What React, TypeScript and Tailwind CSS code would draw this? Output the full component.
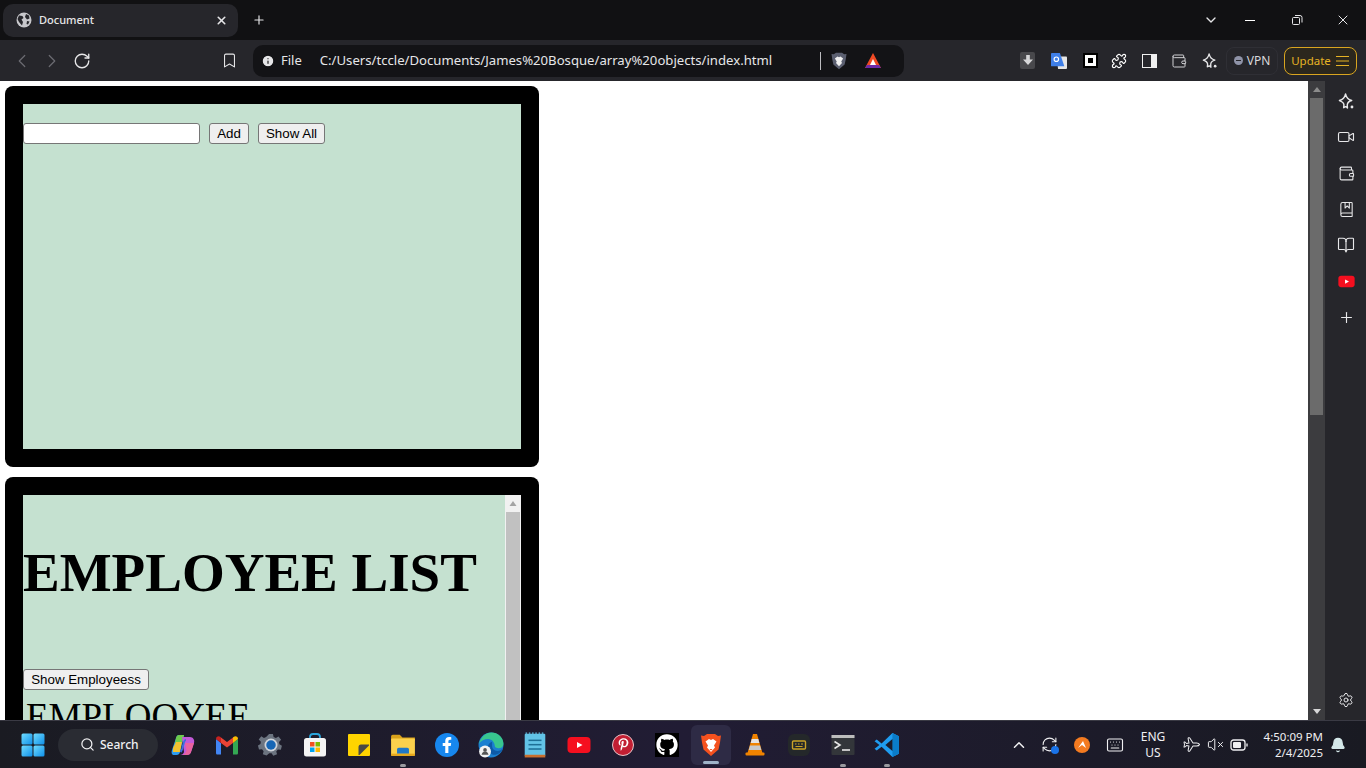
import {
  Bell,
  BookMarked,
  BookOpen,
  Bookmark,
  ChevronDown,
  ChevronLeft,
  ChevronRight,
  ChevronUp,
  Info,
  Keyboard,
  Plane,
  Plus,
  Puzzle,
  RefreshCw,
  RotateCw,
  Search,
  Settings,
  Video,
  VolumeX,
  Wallet,
  X,
} from "lucide-react";
import { FaFacebookF, FaGithub, FaPinterestP } from "react-icons/fa";
import { ReactNode } from "react";

function WindowsLogo() {
  return (
    <svg width="24" height="24" viewBox="0 0 24 24">
      <defs>
        <linearGradient id="win" x1="0" y1="0" x2="1" y2="1">
          <stop offset="0" stopColor="#6fdcff" />
          <stop offset="1" stopColor="#0f8fe8" />
        </linearGradient>
      </defs>
      <rect x="0.5" y="0.5" width="11" height="11" rx="1.5" fill="url(#win)" />
      <rect x="12.5" y="0.5" width="11" height="11" rx="1.5" fill="url(#win)" />
      <rect x="0.5" y="12.5" width="11" height="11" rx="1.5" fill="url(#win)" />
      <rect x="12.5" y="12.5" width="11" height="11" rx="1.5" fill="url(#win)" />
    </svg>
  );
}

function Copilot() {
  return (
    <svg width="24" height="24" viewBox="0 0 24 24">
      <path d="M8 2h5l-4 17c-.4 2-1.600 3-3.500 3H3C1 22 0 20 1 17L5 5c.5-2 1.500-3 3-3z" fill="#2d9cf0" />
      <path d="M8 2h5l-2 8H4l1-5c.5-2 1.500-3 3-3z" fill="#6ecb4b" />
      <path d="M2 15l3-6h6l-2 10H2z" fill="#f2c230" />
      <path d="M11 4h8c3 0 5 3 4 6l-3 9c-.5 2-2 3-4 3h-7c2 0 3.500-1 4-3z" fill="#c25ad8" />
      <path d="M14 10h9l-3 9c-.5 2-2 3-4 3h-4c2-1 3-3 3.500-5z" fill="#e9629f" />
      <path d="M9.500 19c1-1 1.300-2 1.600-3l1.900-7c.3-1 1-2 2-2" fill="none" stroke="#3b6fe0" strokeWidth="2" />
    </svg>
  );
}

function Gmail() {
  return (
    <svg width="24" height="24" viewBox="0 0 24 24">
      <path d="M1 6v14c0 1 .6 1.500 1.500 1.500H6V10z" fill="#4285f4" />
      <path d="M23 6v14c0 1-.6 1.500-1.500 1.500H18V10z" fill="#34a853" />
      <path d="M6 10V4.500L12 9l6-4.500V10l-6 4.500z" fill="#ea4335" />
      <path d="M1 6c0-2.500 2.500-3.500 4.500-2L6 4.500V10L1 6z" fill="#c5221f" />
      <path d="M23 6c0-2.500-2.500-3.500-4.500-2l-.5.500V10l5-4z" fill="#fbbc04" />
    </svg>
  );
}

function Gear() {
  return (
    <svg width="26" height="26" viewBox="0 0 24 24">
      <path
        d="M10 1h4l.7 3 2.300 1 2.700-1.600 2.700 3.500-2.200 2.200.4 2.400 2.600 1.500-1.100 4-3.100-.1-1.600 1.900.8 3-3.900 1.400-1.700-2.600h-2.400L7.500 23 3.600 21.600l.8-3-1.600-1.900-3.100.1-1.100-4 2.600-1.500.4-2.400-2.200-2.200 2.700-3.500L4.800 5 7 4z"
        fill="#6c7480"
        transform="translate(1.200 1) scale(0.9)"
      />
      <circle cx="12" cy="12" r="6" fill="#d0d4da" />
      <circle cx="12" cy="12" r="4.400" fill="#1766b5" />
    </svg>
  );
}

function Store() {
  return (
    <svg width="24" height="24" viewBox="0 0 24 24">
      <path d="M7 6V4a3 3 0 0 1 3-3h4a3 3 0 0 1 3 3v2" fill="none" stroke="#2aa5dc" strokeWidth="1.800" />
      <rect x="1" y="5" width="22" height="18.500" rx="2.500" fill="#f4f4f4" />
      <rect x="7" y="9" width="4.500" height="4.500" fill="#f25022" />
      <rect x="12.500" y="9" width="4.500" height="4.500" fill="#7fba00" />
      <rect x="7" y="14.500" width="4.500" height="4.500" fill="#00a4ef" />
      <rect x="12.500" y="14.500" width="4.500" height="4.500" fill="#ffb900" />
    </svg>
  );
}

function Sticky() {
  return (
    <svg width="24" height="24" viewBox="0 0 24 24">
      <path d="M2 1h20a1 1 0 0 1 1 1v20a1 1 0 0 1-1 1H2a1 1 0 0 1-1-1V2a1 1 0 0 1 1-1z" fill="#ffd400" />
      <path d="M22 11.500v1L12.500 22h-1v-8a2.500 2.500 0 0 1 2.500-2.500z" fill="#4a4a44" />
    </svg>
  );
}

function Explorer() {
  return (
    <svg width="26" height="26" viewBox="0 0 24 24">
      <path d="M1 4a1.500 1.500 0 0 1 1.500-1.500H9L11.500 5H23v3H1z" fill="#d9a21b" />
      <rect x="1" y="6" width="22" height="16" rx="1" fill="#fcd14c" />
      <path d="M6.500 20v-4a1.500 1.500 0 0 1 1.500-1.500h8a1.500 1.500 0 0 1 1.500 1.500v4z" fill="#1f78c8" />
      <rect x="1" y="20" width="22" height="2" fill="#e8a81c" />
    </svg>
  );
}

function Edge() {
  return (
    <svg width="26" height="26" viewBox="0 0 24 24">
      <circle cx="12" cy="12" r="11.500" fill="#1a7fd0" />
      <path d="M1 11C2.500 4.500 7 .5 12.500.5 18.500.5 23.500 5 23.500 11c0 2.500-2 4-4.500 4-2 0-3.500-.8-3.500-2 0-3-2.500-6.500-6-6.500-3.500 0-7 1.500-8.500 4.500z" fill="#38c68f" />
      <path d="M13 9c-2 .5-4 2.500-4 5.500 0 3 2 5.500 5 6.500 4 .5 7.500-2 9-6-1 1.500-3 2.500-5 2.500-3 0-5-2-5-5 0-1.500 0-2.500 0-3.500z" fill="#0d5aa8" />
      <circle cx="6.500" cy="18" r="5.500" fill="#f2f2f2" />
      <circle cx="6.500" cy="16.500" r="1.700" fill="#555" />
      <path d="M3.300 21c.5-2 1.700-3 3.200-3s2.700 1 3.200 3z" fill="#555" />
    </svg>
  );
}

function Notepad() {
  return (
    <svg width="26" height="26" viewBox="0 0 24 24">
      <rect x="2.500" y="1.500" width="19" height="21" rx="1" fill="#62c3e6" />
      <path d="M4 1.500v-1M7 1.500v-1M10 1.500v-1M13 1.500v-1M16 1.500v-1M19 1.500v-1" stroke="#62c3e6" strokeWidth="1.400" />
      <rect x="2.500" y="21" width="19" height="2.500" fill="#c96f2d" />
      <rect x="6" y="7" width="12" height="1.400" fill="#1d6f96" />
      <rect x="6" y="11" width="12" height="1.400" fill="#1d6f96" />
      <rect x="6" y="15" width="12" height="1.400" fill="#1d6f96" />
    </svg>
  );
}

function Youtube({ size = 24 }: { size?: number }) {
  return (
    <svg width={size} height={size} viewBox="0 0 24 24">
      <rect x="0.500" y="4" width="23" height="16" rx="4" fill="#f50f1f" />
      <path d="M10 9l5.500 3-5.500 3z" fill="#fff" />
    </svg>
  );
}

function Brave({ size = 24 }: { size?: number }) {
  return (
    <svg width={size} height={size} viewBox="0 0 24 24">
      <path d="M5 3l3-2h8l3 2 3-.5-1 7-1.500 7L12 23 4.500 16.500 3 9.500l-1-7z" fill="#f4511e" />
      <path d="M6.500 8.500L10 6l2 1 2-1 3.500 2.500-2.500 4 1 2-4 4.500-4-4.500 1-2z" fill="#fff" />
      <path d="M10.500 16h3L12 17.500z" fill="#f4511e" />
    </svg>
  );
}

function Vlc() {
  return (
    <svg width="24" height="24" viewBox="0 0 24 24">
      <path d="M10 1h4l5.500 19h-15z" fill="#f08300" />
      <path d="M8.700 6h6.600l1 4H7.700z" fill="#e4e4e4" />
      <path d="M7 12.500h10l1.300 4.500H5.700z" fill="#c9c9c9" />
      <rect x="2.500" y="19.500" width="19" height="3" rx="1" fill="#f08300" />
    </svg>
  );
}

function KeyApp() {
  return (
    <svg width="24" height="24" viewBox="0 0 24 24">
      <rect x="1" y="1" width="22" height="22" rx="6" fill="#24282a" />
      <rect x="5.500" y="8" width="13" height="8" rx="1" fill="none" stroke="#c9a227" strokeWidth="1.400" />
      <path d="M8 11h1.500M11 11h1.500M14 11h2M8.500 13.500h7" stroke="#c9a227" strokeWidth="1.200" />
    </svg>
  );
}

function Terminal() {
  return (
    <svg width="24" height="24" viewBox="0 0 24 24">
      <rect x="0.500" y="2" width="23" height="20" rx="1" fill="#33363a" />
      <rect x="0.500" y="2" width="23" height="3" fill="#bdbdbd" />
      <path d="M3.500 8.500L9 12l-5.500 3.500" fill="none" stroke="#e8e8e8" strokeWidth="1.600" />
      <path d="M11 17h8" stroke="#e8e8e8" strokeWidth="1.600" />
    </svg>
  );
}

function VsCode() {
  return (
    <svg width="26" height="26" viewBox="0 0 24 24">
      <path d="M17 1l6 3v16l-6 3-10-9.500L2.500 17 .5 15.500 5 12 .5 8.500 2.500 7 7 10.500z" fill="#1f9cf0" />
      <path d="M17 1l6 3v16l-6 3z" fill="#0a7cc9" />
      <path d="M17 6.500L10.500 12l6.500 5.500z" fill="#1a1c2c" />
    </svg>
  );
}

// four point sparkle with the small dot at its lower right
function StarPlus({ size = 17 }: { size?: number }) {
  return (
    <svg width={size} height={size} viewBox="0 0 18 18" fill="none" stroke="currentColor" strokeWidth="1.500">
      <path d="M8 1c.8 4 2.500 6 6.500 7-3.500 1-4.500 2.500-4.700 4.500L10 16c-1-1.500-2-2-4-.5l.3-3C6 10 4.500 9 1.500 8 5.500 7 7.200 5 8 1z" strokeLinejoin="round" />
      <circle cx="14.800" cy="14.800" r="1.500" fill="currentColor" stroke="none" />
    </svg>
  );
}

function DashFile({ children }: { children: ReactNode }) {
  return <div className="flex h-12 w-11 items-center justify-center">{children}</div>;
}

function RunningApp({ children }: { children: ReactNode }) {
  return (
    <div className="relative flex h-12 w-11 items-center justify-center">
      {children}
      <div className="absolute bottom-[2px] left-1/2 h-[3px] w-[6px] -translate-x-1/2 rounded-full bg-[#9a9a9f]" />
    </div>
  );
}

function SideIcon({ children }: { children: ReactNode }) {
  return <div className="flex h-9 w-full items-center justify-center text-[#e8e8ea]">{children}</div>;
}

function TitleBar() {
  return (
    <div className="flex h-10 shrink-0 items-center bg-[#111113] text-[#e6e6e8]">
      <div className="ml-[3px] flex h-[33px] w-[235px] items-center rounded-[10px] bg-[#26262b] pl-[13px] pr-[10px]">
        <svg width="16" height="16" viewBox="0 0 16 16">
          <circle cx="8" cy="8" r="7.500" fill="#c8c8cc" />
          <path d="M3 3.500l3.500.5 1 2-2 1.500L7 10l-1 3.500L3 10 1.500 7zM10 2l3 1.500.5 3-2.500 1-2-2.500zM11 9l2.500.5-1.500 3-1.500-.5z" fill="#26262b" />
        </svg>
        <span className="ml-[7px] flex-1 text-[11px] font-medium">Document</span>
        <X size={13} strokeWidth={3} />
      </div>
      <Plus size={14} strokeWidth={2} className="ml-[14px]" />
      <div className="flex-1" />
      <ChevronDown size={16} strokeWidth={2} className="mr-[26px]" />
      <div className="mr-[36px] h-px w-[10px] bg-white" />
      <svg width="12" height="12" viewBox="0 0 12 12" className="mr-[32px]" fill="none" stroke="currentColor">
        <rect x="1.500" y="3.500" width="7" height="7" rx="1" />
        <path d="M4 1.500h5a2 2 0 0 1 2 2v5" />
      </svg>
      <X size={16} strokeWidth={1.500} className="mr-[15px]" />
    </div>
  );
}

function Toolbar() {
  return (
    <div className="flex h-[41px] shrink-0 items-center bg-[#26262b] text-[#e6e6e8]">
      <ChevronLeft size={22} strokeWidth={1.300} className="ml-[11px] text-[#6c6c72]" />
      <ChevronRight size={22} strokeWidth={1.300} className="ml-[8px] text-[#6c6c72]" />
      <RotateCw size={18} strokeWidth={1.800} className="ml-[10px]" />
      <Bookmark size={17} strokeWidth={1.500} className="ml-[130px]" />
      <div className="ml-[15px] flex h-8 w-[651px] items-center rounded-[10px] bg-[#131316] pl-2">
        <Info size={14} fill="#e6e6e8" stroke="#131316" strokeWidth={2} />
        <span className="ml-[6px] text-[13px]">File</span>
        <span className="ml-[18px] w-[500px] whitespace-nowrap text-[13.150px]">C:/Users/tccle/Documents/James%20Bosque/array%20objects/index.html</span>
        <div className="h-[18px] w-px bg-[#bcbcc0]" />
        <div className="ml-[9px]">
          <svg width="18" height="20" viewBox="0 0 24 24">
            <path d="M5 3l3-2h8l3 2 3-.5-1 7-1.500 7L12 23 4.500 16.500 3 9.500l-1-7z" fill="#5b5f70" />
            <path d="M6.500 8.500L10 6l2 1 2-1 3.500 2.500-2.500 4 1 2-4 4.500-4-4.500 1-2z" fill="#f0f0f0" />
          </svg>
        </div>
        <div className="ml-[16px]">
          <svg width="18" height="18" viewBox="0 0 18 18">
            <path d="M9 1l8 15H1z" fill="#f04a24" />
            <path d="M1 16h16l-2-3H3z" fill="#6c2aa8" />
            <path d="M9 7l3 6H6z" fill="#fff" />
          </svg>
        </div>
      </div>
      <div className="ml-[116px] flex h-[17px] w-[15px] items-center justify-center rounded-[2px] bg-[#48484c]">
        <svg width="10" height="11" viewBox="0 0 11 12">
          <path d="M3.500 0h4v5H11l-5.500 6L0 5h3.500z" fill="#d6d6d8" />
        </svg>
      </div>
      <div className="ml-[16px]">
        <svg width="16" height="16" viewBox="0 0 18 18">
          <path d="M6 4h11a1 1 0 0 1 1 1v12a1 1 0 0 1-1 1H8z" fill="#e6e6e6" />
          <path d="M1 0h9l5 15H1a1 1 0 0 1-1-1V1a1 1 0 0 1 1-1z" fill="#3f7fe8" />
          <circle cx="6" cy="7" r="2.500" fill="none" stroke="#fff" strokeWidth="1.300" />
        </svg>
      </div>
      <div className="ml-[16px] flex h-[15px] w-[15px] items-center justify-center bg-black">
        <div className="h-[11px] w-[11px] border-[3px] border-white bg-black" />
      </div>
      <Puzzle size={16} strokeWidth={1.700} className="ml-[13px] text-white" />
      <svg width="15" height="14" viewBox="0 0 15 14" className="ml-[15px]">
        <rect x="0.500" y="0.500" width="14" height="13" fill="none" stroke="#f0f0f0" />
        <rect x="9" y="1" width="5" height="12" fill="#f0f0f0" />
      </svg>
      <Wallet size={16} strokeWidth={1.500} className="ml-[14px] text-[#d0d0d4]" />
      <div className="ml-[15px]">
        <StarPlus size={16} />
      </div>
      <div className="ml-[8px] flex h-[28px] w-[52px] items-center justify-center rounded-lg border border-[#2f2f35] text-[12px] text-[#d8d8dc]">
        <div className="mr-[4px] flex h-[9px] w-[9px] items-center justify-center rounded-full bg-[#8f93a8]">
          <div className="h-px w-[5px] bg-[#26262b]" />
        </div>
        VPN
      </div>
      <div className="ml-[6px] flex h-[28px] w-[73px] items-center justify-center rounded-lg border border-[#d9a520] bg-[#2b271d] text-[11.500px] text-[#e6b325]">
        Update
        <svg width="15" height="12" viewBox="0 0 15 12" className="ml-[4px]" stroke="currentColor">
          <path d="M1 1.500h13M1 6h13M1 10.500h13" />
        </svg>
      </div>
    </div>
  );
}

function PageButton({ children, className }: { children: ReactNode; className?: string }) {
  return (
    <button className={`h-[21px] rounded-[3px] border border-[#767676] bg-[#efefef] text-center font-['Liberation_Sans',Arial,sans-serif] text-[13.330px] leading-none text-black ${className ?? ""}`}>
      {children}
    </button>
  );
}

function PageContent() {
  return (
    <div className="flex-1 overflow-hidden bg-white p-[5px] font-['Liberation_Serif','Times_New_Roman',serif]">
      <div className="mb-[10px] h-[381px] w-[534px] rounded-lg bg-black p-[18px]">
        <div className="flex h-[345px] items-start bg-[#c5e1d0] pt-[19px]">
          <input className="h-[21px] w-[177px] rounded-[3px] border border-[#767676] bg-white" />
          <PageButton className="ml-[9px] w-10">Add</PageButton>
          <PageButton className="ml-[9px] w-[67px]">Show All</PageButton>
        </div>
      </div>
      <div className="h-[381px] w-[534px] rounded-lg bg-black p-[18px]">
        <div className="flex h-[345px] overflow-hidden bg-[#c5e1d0]">
          <div className="flex-1 overflow-hidden">
            <h1 className="mt-[47px] whitespace-nowrap text-[55px] font-bold leading-[62px] text-black">EMPLOYEE LIST</h1>
            <PageButton className="mt-[65px] block w-[126px]">Show Employeess</PageButton>
            <div className="mt-[6px] whitespace-nowrap pl-[3px] text-[37px] leading-[41px] text-black">EMPLOOYEE</div>
          </div>
          <div className="flex w-4 flex-col items-center bg-[#f1f1f1]">
            <svg width="8" height="17" viewBox="0 0 8 17" fill="#a3a3a3">
              <path d="M4 6l3.500 5h-7z" />
            </svg>
            <div className="w-[14px] flex-1 bg-[#c1c1c1]" />
          </div>
        </div>
      </div>
    </div>
  );
}

function PageScrollbar() {
  return (
    <div className="flex w-[17px] shrink-0 flex-col items-center justify-between bg-[#3c3c3f]">
      <div className="flex w-full flex-col items-center">
        <svg width="10" height="17" viewBox="0 0 10 17" fill="#8c8c8c">
          <path d="M5 6l4 5H1z" />
        </svg>
        <div className="h-[317px] w-[13px] bg-[#6b6b6b]" />
      </div>
      <svg width="10" height="17" viewBox="0 0 10 17" fill="#d8d8d8">
        <path d="M5 11l4-5H1z" />
      </svg>
    </div>
  );
}

function Sidebar() {
  return (
    <div className="flex w-[41px] shrink-0 flex-col justify-between bg-[#26262b] pl-[1px] pt-[2px]">
      <div>
        <SideIcon><StarPlus /></SideIcon>
        <SideIcon><Video size={18} strokeWidth={1.500} /></SideIcon>
        <SideIcon><Wallet size={17} strokeWidth={1.500} /></SideIcon>
        <SideIcon><BookMarked size={17} strokeWidth={1.500} /></SideIcon>
        <SideIcon><BookOpen size={18} strokeWidth={1.500} /></SideIcon>
        <SideIcon><Youtube size={17} /></SideIcon>
        <SideIcon><Plus size={17} strokeWidth={1.600} /></SideIcon>
      </div>
      <div className="mb-[2px]">
        <SideIcon><Settings size={16} strokeWidth={1.500} /></SideIcon>
      </div>
    </div>
  );
}

function Taskbar() {
  return (
    <div className="flex h-12 shrink-0 items-center border-t border-[#3a3a44] bg-gradient-to-r from-[#1a1b22] via-[#211c34] to-[#191a22] pl-[11px] text-[#f0f0f2]">
      <DashFile><WindowsLogo /></DashFile>
      <div className="ml-[3px] mr-[3px] flex h-8 w-[100px] items-center rounded-full bg-[#2a2c33] pl-[22px] text-[12px] font-medium">
        <Search size={15} strokeWidth={2} />
        <span className="ml-[5px]">Search</span>
      </div>
      <DashFile><Copilot /></DashFile>
      <DashFile><Gmail /></DashFile>
      <DashFile><Gear /></DashFile>
      <DashFile><Store /></DashFile>
      <DashFile><Sticky /></DashFile>
      <RunningApp><Explorer /></RunningApp>
      <DashFile>
        <div className="flex h-6 w-6 items-center justify-center rounded-full bg-[#1787ee] text-white">
          <FaFacebookF size={16} />
        </div>
      </DashFile>
      <DashFile><Edge /></DashFile>
      <DashFile><Notepad /></DashFile>
      <DashFile><Youtube /></DashFile>
      <DashFile>
        <div className="flex h-[22px] w-[22px] items-center justify-center rounded-full border border-[#e8c8cc] bg-[#c21f33] text-white">
          <FaPinterestP size={13} />
        </div>
      </DashFile>
      <DashFile>
        <div className="flex h-6 w-6 items-center justify-center bg-black text-white">
          <FaGithub size={22} />
        </div>
      </DashFile>
      <div className="relative mx-[2px] flex h-10 w-10 items-center justify-center rounded-md bg-[#2e2b45]">
        <Brave />
        <div className="absolute bottom-[1px] left-1/2 h-[3px] w-4 -translate-x-1/2 rounded-full bg-[#9fb3c8]" />
      </div>
      <DashFile><Vlc /></DashFile>
      <DashFile><KeyApp /></DashFile>
      <RunningApp><Terminal /></RunningApp>
      <RunningApp><VsCode /></RunningApp>
      <div className="flex-1" />
      <ChevronUp size={18} strokeWidth={2} className="mr-[13px]" />
      <div className="relative mr-[16px]">
        <RefreshCw size={17} strokeWidth={1.500} />
        <div className="absolute -bottom-[1px] -right-[1px] h-2 w-2 rounded-full bg-[#1a73e8]" />
      </div>
      <div className="mr-[16px] flex h-4 w-4 items-center justify-center rounded-full bg-[#f47b20]">
        <svg width="10" height="10" viewBox="0 0 10 10" fill="#fff">
          <path d="M1 8l5-7 3 7-4-3z" />
        </svg>
      </div>
      <Keyboard size={18} strokeWidth={1.500} className="mr-[15px]" />
      <div className="mr-[15px] w-[28px] text-center text-[12px] leading-[16px]">
        <div>ENG</div>
        <div>US</div>
      </div>
      <Plane size={17} strokeWidth={1.400} className="mr-[8px] rotate-45" />
      <VolumeX size={17} strokeWidth={1.400} className="mr-[6px]" />
      <svg width="18" height="12" viewBox="0 0 18 12" className="mr-[9px]" fill="none" stroke="currentColor" strokeWidth="1.300">
        <rect x="1" y="1" width="14" height="10" rx="2.500" />
        <rect x="3" y="3" width="8" height="6" fill="currentColor" stroke="none" rx="1" />
        <path d="M17 4.500v3" />
      </svg>
      <div className="w-[66px] whitespace-nowrap text-right text-[11.500px] leading-[16px]">
        <div>4:50:09 PM</div>
        <div>2/4/2025</div>
      </div>
      <Bell size={16} fill="#d5e8ea" stroke="#d5e8ea" className="ml-[7px] mr-[20px]" />
    </div>
  );
}

export default function App() {
  return (
    <div className="flex h-screen w-screen flex-col overflow-hidden font-['Noto_Sans',sans-serif]">
      <TitleBar />
      <Toolbar />
      <div className="flex min-h-0 flex-1">
        <PageContent />
        <PageScrollbar />
        <Sidebar />
      </div>
      <Taskbar />
    </div>
  );
}
